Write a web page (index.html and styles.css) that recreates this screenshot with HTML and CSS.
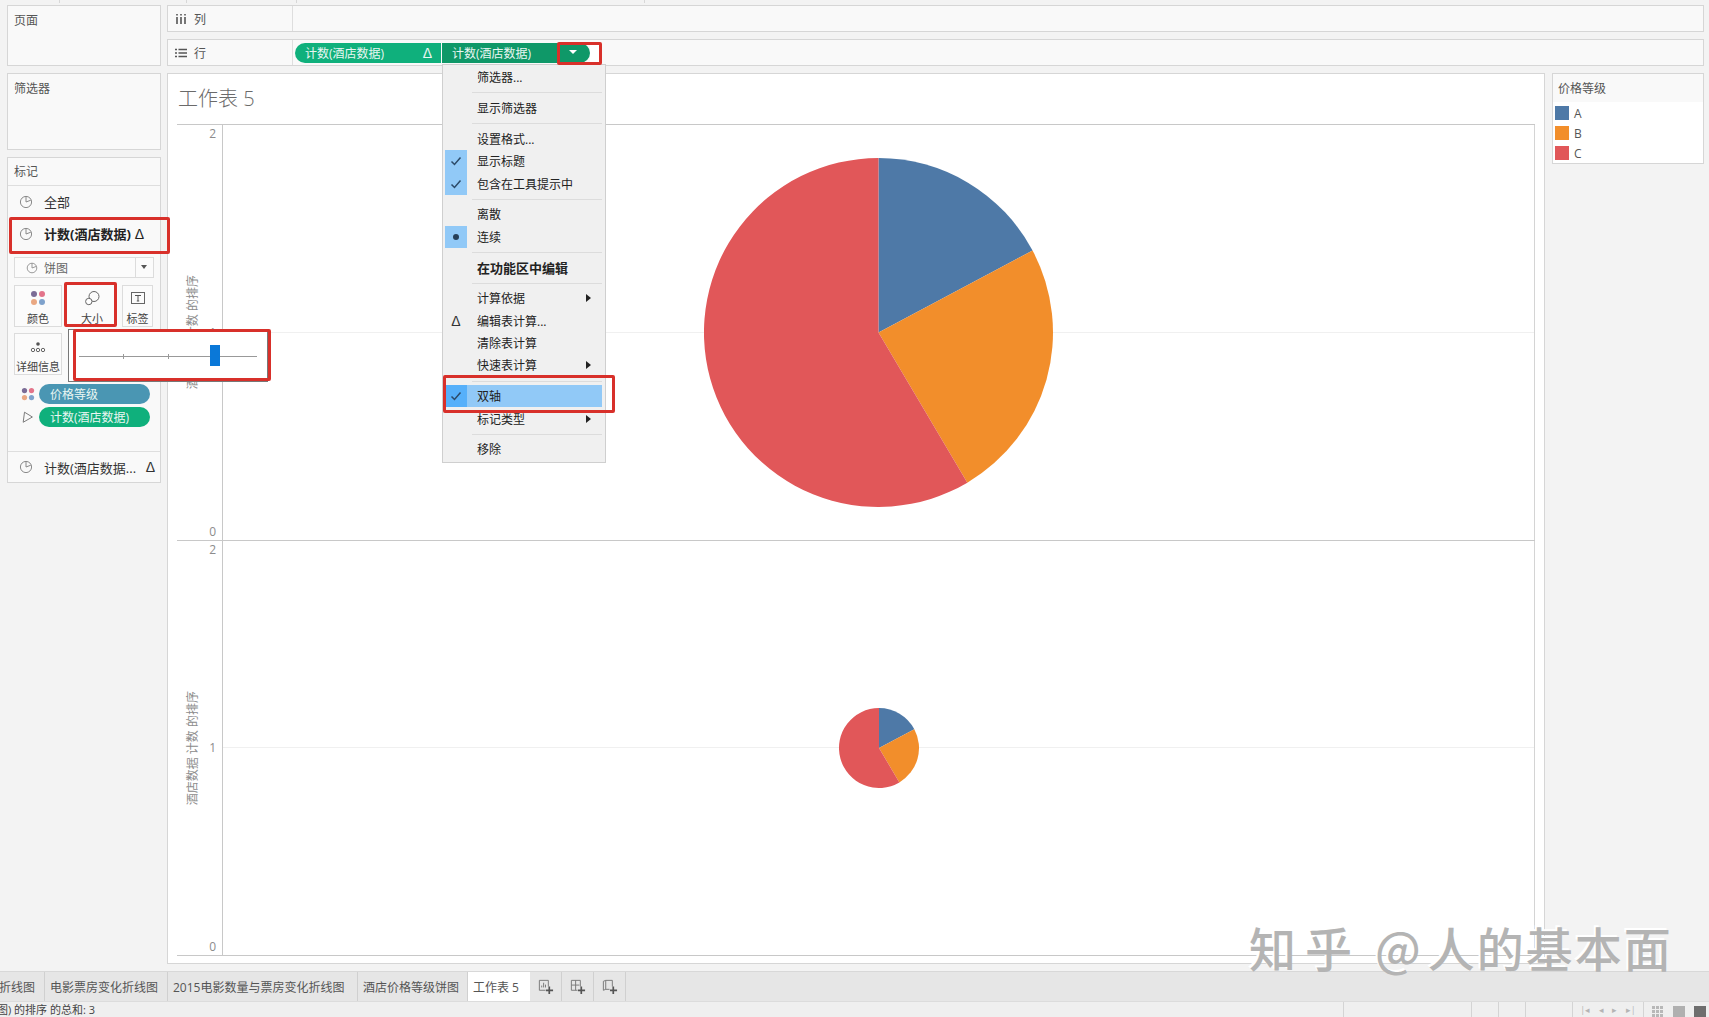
FILE: index.html
```html
<!DOCTYPE html>
<html lang="zh-CN">
<head>
    <meta charset="UTF-8">
    <title>工作表 5</title>
    <link rel="stylesheet" href="styles.css">
</head>
<body>
    <svg class="icon-defs" width="0" height="0">
        <symbol id="pie-icon" viewBox="0 0 14 14">
            <circle cx="7" cy="7" r="5.6" fill="none" stroke="#8a8a8a" stroke-width="1"/>
            <path d="M7 1.4V7L11.8 5.2" fill="none" stroke="#8a8a8a" stroke-width="1"/>
        </symbol>
        <symbol id="dots-icon" viewBox="0 0 16 16">
            <circle cx="4" cy="4" r="3" fill="#7b6c96"/>
            <circle cx="12" cy="4" r="3" fill="#e3748a"/>
            <circle cx="4" cy="12" r="3" fill="#e9a883"/>
            <circle cx="12" cy="12" r="3" fill="#7fa2cc"/>
        </symbol>
    </svg>

    <div class="top-ticks"><span></span><span></span><span></span><span></span></div>

    <div class="workspace">
        <aside class="sidebar">
            <section class="panel pages-panel"><div class="panel-title">页面</div></section>
            <section class="panel filters-panel"><div class="panel-title">筛选器</div></section>
            <section class="panel marks-panel">
                <div class="panel-title marks-title">标记</div>
                <div class="marks-row"><svg class="row-icon"><use href="#pie-icon"/></svg>全部</div>
                <div class="marks-row marks-row-active"><svg class="row-icon"><use href="#pie-icon"/></svg>计数(酒店数据) <span class="delta">Δ</span></div>
                <div class="mark-type">
                    <svg class="type-icon"><use href="#pie-icon"/></svg>
                    <span class="type-name">饼图</span>
                    <span class="type-arrow"></span>
                </div>
                <div class="mark-cards">
                    <div class="mark-card"><svg class="card-icon" viewBox="0 0 16 16"><use href="#dots-icon"/></svg>颜色</div>
                    <div class="mark-card mark-card-plain">
                        <svg class="card-icon" viewBox="0 0 16 16"><circle cx="10" cy="6.5" r="5" fill="none" stroke="#666"/><circle cx="4.8" cy="11.5" r="3.2" fill="#fff" stroke="#666"/></svg>大小
                    </div>
                    <div class="mark-card">
                        <svg class="card-icon" viewBox="0 0 16 16"><rect x="1.5" y="2.5" width="13" height="11" fill="none" stroke="#666"/><path d="M5 5.5H11M8 5.5V11M6.8 11H9.2" fill="none" stroke="#555"/></svg>标签
                    </div>
                    <div class="mark-card">
                        <svg class="card-icon" viewBox="0 0 16 16"><circle cx="8" cy="6" r="1.8" fill="#555"/><circle cx="3" cy="12" r="1.7" fill="none" stroke="#666"/><circle cx="8" cy="12" r="1.7" fill="none" stroke="#666"/><circle cx="13" cy="12" r="1.7" fill="none" stroke="#666"/></svg>详细信息
                    </div>
                </div>
                <div class="mark-field">
                    <svg class="field-icon" viewBox="0 0 16 16"><use href="#dots-icon"/></svg>
                    <span class="field-pill field-pill-blue">价格等级</span>
                </div>
                <div class="mark-field">
                    <svg class="field-icon" viewBox="0 0 16 16"><path d="M4 2.5L13 8L2.5 14Z" fill="none" stroke="#777" stroke-width="1.1"/></svg>
                    <span class="field-pill field-pill-green">计数(酒店数据)</span>
                </div>
                <div class="marks-row marks-row-last"><svg class="row-icon"><use href="#pie-icon"/></svg>计数(酒店数据... <span class="delta delta-end">Δ</span></div>
            </section>
        </aside>

        <main class="content">
            <div class="shelf">
                <div class="shelf-label">
                    <svg class="shelf-icon" viewBox="0 0 10 12"><path d="M1 1V2.5M5 1V2.5M9 1V2.5M1 4V11M5 4V11M9 4V11" stroke="#555" stroke-width="1.6" fill="none"/></svg>列
                </div>
                <div class="shelf-fields"></div>
            </div>
            <div class="shelf">
                <div class="shelf-label">
                    <svg class="shelf-icon" viewBox="0 0 12 10"><path d="M0 1.5H2M3.5 1.5H12M0 5H2M3.5 5H12M0 8.5H2M3.5 8.5H12" stroke="#555" stroke-width="1.6" fill="none"/></svg>行
                </div>
                <div class="shelf-fields">
                    <div class="shelf-pill shelf-pill-first">计数(酒店数据)<span class="delta pill-delta">Δ</span></div>
                    <div class="shelf-pill shelf-pill-second">计数(酒店数据)<span class="pill-arrow"></span></div>
                    <div class="shelf-slot"></div>
                </div>
            </div>

            <div class="view-row">
                <section class="view">
                    <h1 class="view-title">工作表 5</h1>
                    <div class="chart">
                        <div class="pane">
                            <div class="axis">
                                <div class="axis-title"><span>酒店数据 计数 的排序</span></div>
                                <div class="axis-ticks"><span>2</span><span>1</span><span>0</span></div>
                            </div>
                            <div class="plot">
                                <svg class="pie pie-large" viewBox="-175 -175 350 350">
                                    <path d="M0 0L0 -175A175 175 0 0 1 154.5 -82.2Z" fill="#4e79a7"/>
                                    <path d="M0 0L154.5 -82.2A175 175 0 0 1 89.1 150.6Z" fill="#f28e2b"/>
                                    <path d="M0 0L89.1 150.6A175 175 0 1 1 0 -175Z" fill="#e15759"/>
                                </svg>
                            </div>
                        </div>
                        <div class="pane">
                            <div class="axis">
                                <div class="axis-title"><span>酒店数据 计数 的排序</span></div>
                                <div class="axis-ticks"><span>2</span><span>1</span><span>0</span></div>
                            </div>
                            <div class="plot">
                                <svg class="pie pie-small" viewBox="-175 -175 350 350">
                                    <path d="M0 0L0 -175A175 175 0 0 1 154.5 -82.2Z" fill="#4e79a7"/>
                                    <path d="M0 0L154.5 -82.2A175 175 0 0 1 89.1 150.6Z" fill="#f28e2b"/>
                                    <path d="M0 0L89.1 150.6A175 175 0 1 1 0 -175Z" fill="#e15759"/>
                                </svg>
                            </div>
                        </div>
                    </div>
                </section>

                <aside class="legend">
                    <div class="legend-title">价格等级</div>
                    <div class="legend-item"><span class="swatch swatch-a"></span>A</div>
                    <div class="legend-item"><span class="swatch swatch-b"></span>B</div>
                    <div class="legend-item"><span class="swatch swatch-c"></span>C</div>
                </aside>
            </div>
        </main>
    </div>

    <nav class="tabs">
        <div class="tab tab-cut">折线图</div>
        <div class="tab tab-movies">电影票房变化折线图</div>
        <div class="tab tab-2015">2015电影数量与票房变化折线图</div>
        <div class="tab tab-hotel">酒店价格等级饼图</div>
        <div class="tab tab-active">工作表 5</div>
        <div class="tab tab-add">
            <svg class="add-icon" viewBox="0 0 18 18"><path d="M2.5 2.5H12V9M9 13H2.5V2.5M5 10V8M7 10V5M9 10V7" fill="none" stroke="#777"/><path d="M13 9V17M9.5 13H17" stroke="#555" stroke-width="1.8"/></svg>
        </div>
        <div class="tab tab-add">
            <svg class="add-icon" viewBox="0 0 18 18"><path d="M2.5 2.5H12V9M9 13H2.5V2.5M2.5 7.5H11M7 2.5V13" fill="none" stroke="#777"/><path d="M13 9V17M9.5 13H17" stroke="#555" stroke-width="1.8"/></svg>
        </div>
        <div class="tab tab-add">
            <svg class="add-icon" viewBox="0 0 18 18"><path d="M2.5 3.5L5 2.5V12L2.5 13ZM5 2.5H12V9M9 12H5" fill="none" stroke="#777"/><path d="M13 9V17M9.5 13H17" stroke="#555" stroke-width="1.8"/></svg>
        </div>
    </nav>

    <footer class="statusbar">
        <div class="status-cell status-text">图) 的排序 的总和: 3</div>
        <div class="status-cell status-wide"></div>
        <div class="status-cell status-small"></div>
        <div class="status-cell status-small"></div>
        <div class="status-cell status-mid"></div>
        <div class="status-cell status-nav">
            <span class="nav-mark">|◂</span><span class="nav-mark">◂</span><span class="nav-mark">▸</span><span class="nav-mark">▸|</span>
        </div>
        <div class="status-cell status-views">
            <span class="view-btn view-btn-grid"></span><span class="view-btn view-btn-fill"></span><span class="view-btn view-btn-dark"></span>
        </div>
    </footer>

    <!-- context menu on the second pill -->
    <div class="menu">
        <div class="menu-item"><span class="gutter"></span>筛选器...</div>
        <div class="menu-sep"></div>
        <div class="menu-item"><span class="gutter"></span>显示筛选器</div>
        <div class="menu-sep"></div>
        <div class="menu-item"><span class="gutter"></span>设置格式...</div>
        <div class="menu-item"><span class="gutter gutter-on"><svg class="check" viewBox="0 0 12 12"><path d="M1.5 6.5L4.5 9.5L10.5 2.5" fill="none" stroke="#2c4a68" stroke-width="1.5"/></svg></span>显示标题</div>
        <div class="menu-item"><span class="gutter gutter-on"><svg class="check" viewBox="0 0 12 12"><path d="M1.5 6.5L4.5 9.5L10.5 2.5" fill="none" stroke="#2c4a68" stroke-width="1.5"/></svg></span>包含在工具提示中</div>
        <div class="menu-sep"></div>
        <div class="menu-item"><span class="gutter"></span>离散</div>
        <div class="menu-item"><span class="gutter gutter-on"><span class="bullet"></span></span>连续</div>
        <div class="menu-sep"></div>
        <div class="menu-item menu-item-bold"><span class="gutter"></span>在功能区中编辑</div>
        <div class="menu-sep"></div>
        <div class="menu-item"><span class="gutter"></span>计算依据<span class="sub-arrow"></span></div>
        <div class="menu-item"><span class="gutter gutter-delta">Δ</span>编辑表计算...</div>
        <div class="menu-item"><span class="gutter"></span>清除表计算</div>
        <div class="menu-item"><span class="gutter"></span>快速表计算<span class="sub-arrow"></span></div>
        <div class="menu-sep"></div>
        <div class="menu-item menu-item-hover"><span class="gutter gutter-hover"><svg class="check" viewBox="0 0 12 12"><path d="M1.5 6.5L4.5 9.5L10.5 2.5" fill="none" stroke="#2c4a68" stroke-width="1.5"/></svg></span>双轴</div>
        <div class="menu-item"><span class="gutter"></span>标记类型<span class="sub-arrow"></span></div>
        <div class="menu-sep"></div>
        <div class="menu-item"><span class="gutter"></span>移除</div>
    </div>

    <!-- size slider popup -->
    <div class="size-popup">
        <div class="size-track">
            <span class="size-tick size-tick-1"></span>
            <span class="size-tick size-tick-2"></span>
            <span class="size-thumb"></span>
        </div>
    </div>

    <!-- red annotation boxes -->
    <div class="callout callout-arrow"></div>
    <div class="callout callout-row"></div>
    <div class="callout callout-size"></div>
    <div class="callout callout-slider"></div>
    <div class="callout callout-dual"></div>

    <div class="watermark"><span class="wm-brand">知乎</span><span class="wm-at">@</span><span class="wm-name">人的基本面</span></div>
</body>
</html>
```

FILE: styles.css
```css
* {
    margin: 0;
    padding: 0;
    box-sizing: border-box;
}

body {
    position: relative;
    display: flex;
    flex-direction: column;
    height: 100vh;
    overflow: hidden;
    background-color: #f3f3f3;
    color: #555;
    font-family: "Open Sans", "Noto Sans CJK SC", sans-serif;
    font-size: 12px;
}

.icon-defs {
    position: absolute;
}

.top-ticks {
    display: flex;
    height: 5px;
    flex-shrink: 0;
}

.top-ticks span {
    height: 3px;
    border-right: 1px solid #d8d8d8;
}

.top-ticks span:nth-child(1) { width: 60px; }
.top-ticks span:nth-child(2) { width: 127px; }
.top-ticks span:nth-child(3) { width: 110px; }
.top-ticks span:nth-child(4) { width: 348px; }

.workspace {
    display: flex;
    flex: 1;
    min-height: 0;
    gap: 6px;
    padding: 0 5px 7px 7px;
}

/* left column */
.sidebar {
    display: flex;
    flex-direction: column;
    gap: 7px;
    width: 154px;
    flex-shrink: 0;
}

.panel {
    background: #f9f9f9;
    border: 1px solid #d6d6d6;
}

.pages-panel {
    height: 61px;
}

.filters-panel {
    height: 77px;
}

.marks-panel {
    height: 326px;
}

.panel-title {
    padding: 7px 0 0 6px;
    line-height: 16px;
}

.marks-title {
    height: 28px;
    padding-top: 6px;
    border-bottom: 1px solid #dedede;
}

.marks-row {
    display: flex;
    align-items: center;
    height: 32px;
    padding: 0 0 1px 11px;
    font-size: 13px;
    color: #333;
}

.marks-row-active {
    font-weight: 700;
    color: #222;
}

.marks-row-last {
    margin-top: 24px;
    border-top: 1px solid #dedede;
}

.row-icon {
    width: 14px;
    height: 14px;
    margin-right: 11px;
    flex-shrink: 0;
}

.delta {
    margin-left: 4px;
    font-family: "Liberation Sans", sans-serif;
    font-size: 14px;
    font-weight: 400;
}

.delta-end {
    margin-left: auto;
    margin-right: 5px;
}

.mark-type {
    display: flex;
    align-items: center;
    height: 21px;
    margin: 7px 6px 0 6px;
    background: #fbfbfb;
    border: 1px solid #dcdcdc;
    color: #666;
}

.type-icon {
    width: 12px;
    height: 12px;
    margin-left: 11px;
}

.type-name {
    flex: 1;
    margin-left: 6px;
}

.type-arrow {
    position: relative;
    width: 18px;
    height: 100%;
    border-left: 1px solid #dcdcdc;
}

.type-arrow::after {
    content: "";
    position: absolute;
    top: 7px;
    left: 5px;
    border: 3.5px solid transparent;
    border-top: 4px solid #555;
}

.mark-cards {
    display: grid;
    grid-template-columns: 48px 52px 31px;
    grid-auto-rows: 42px;
    gap: 6px 4px;
    margin: 7px 0 0 6px;
}

.mark-card {
    display: flex;
    flex-direction: column;
    align-items: center;
    padding-top: 4px;
    background: #fbfbfb;
    border: 1px solid #dcdcdc;
    font-size: 11px;
    line-height: 18px;
    color: #444;
    white-space: nowrap;
}

.mark-card-plain {
    border-color: transparent;
}

.card-icon {
    width: 16px;
    height: 16px;
    margin-bottom: 4px;
    flex-shrink: 0;
}

.mark-field {
    display: flex;
    align-items: center;
    height: 20px;
    margin: 3px 0 0 13px;
}

.mark-cards + .mark-field {
    margin-top: 9px;
}

.field-icon {
    width: 14px;
    height: 14px;
    margin-right: 4px;
}

.field-pill {
    display: flex;
    align-items: center;
    width: 111px;
    height: 20px;
    padding-left: 11px;
    border-radius: 10px;
    color: #e9f6f2;
}

.field-pill-blue {
    background: #4a96b3;
}

.field-pill-green {
    background: #0fb07c;
}

/* shelves */
.content {
    display: flex;
    flex-direction: column;
    flex: 1;
    min-width: 0;
    gap: 7px;
}

.shelf {
    display: flex;
    height: 27px;
    flex-shrink: 0;
    background: #f9f9f9;
    border: 1px solid #d6d6d6;
}

.shelf-label {
    display: flex;
    align-items: center;
    width: 125px;
    padding-left: 7px;
    border-right: 1px solid #dedede;
}

.shelf-icon {
    width: 12px;
    height: 12px;
    margin-right: 7px;
}

.shelf-fields {
    display: flex;
    align-items: center;
    flex: 1;
    padding-left: 2px;
}

.shelf-pill {
    display: flex;
    align-items: center;
    height: 20px;
    padding-left: 10px;
    color: #e9f6f2;
}

.shelf-pill-first {
    width: 146px;
    margin-right: 1px;
    background: #0fb07c;
    border-radius: 10px 0 0 10px;
}

.shelf-pill-second {
    width: 148px;
    background: #0f9868;
    border-radius: 0 10px 10px 0;
}

.shelf-slot {
    width: 10px;
    height: 20px;
    background: #fff;
}

.pill-delta {
    margin-left: auto;
    margin-right: 9px;
}

.pill-arrow {
    margin: 3px 0 0 38px;
    border: 4px solid transparent;
    border-top: 4px solid #fff;
}

/* worksheet */
.view-row {
    display: flex;
    flex: 1;
    min-height: 0;
    gap: 7px;
}

.view {
    display: flex;
    flex-direction: column;
    flex: 1;
    min-width: 0;
    padding: 0 9px 7px;
    background: #fff;
    border: 1px solid #d6d6d6;
}

.view-title {
    height: 50px;
    padding: 12px 0 0 1px;
    font-size: 20px;
    font-weight: 300;
    line-height: 26px;
    color: #6a6a6a;
}

.chart {
    display: flex;
    flex-direction: column;
    flex: 1;
    border-bottom: 1px solid #c8c8c8;
}

.pane {
    display: flex;
    flex: 1;
    border-top: 1px solid #c8c8c8;
}

.axis {
    display: flex;
    width: 46px;
    flex-shrink: 0;
    border-right: 1px solid #c8c8c8;
}

.axis-title {
    display: flex;
    flex: 1;
    align-items: center;
    justify-content: center;
    padding-right: 2px;
}

.axis-title span {
    writing-mode: vertical-rl;
    text-orientation: sideways;
    transform: rotate(180deg);
    color: #8c8c8c;
    white-space: nowrap;
}

.axis-ticks {
    display: flex;
    flex-direction: column;
    justify-content: space-between;
    padding: 1px 6px 0 0;
    line-height: 16px;
    color: #8c8c8c;
}

.plot {
    display: flex;
    flex: 1;
    align-items: center;
    justify-content: center;
    background: linear-gradient(#f0f0f0, #f0f0f0) center / 100% 1px no-repeat;
    border-right: 1px solid #d4d4d4;
}

.pie-large {
    width: 349px;
    height: 349px;
}

.pie-small {
    width: 80px;
    height: 80px;
}

/* legend */
.legend {
    width: 152px;
    height: 91px;
    flex-shrink: 0;
    background: #fff;
    border: 1px solid #d6d6d6;
    color: #555;
}

.legend-title {
    height: 28px;
    padding: 7px 0 0 5px;
    margin-bottom: 1px;
    background: #f9f9f9;
    line-height: 16px;
}

.legend-item {
    display: flex;
    align-items: center;
    height: 20px;
    padding-left: 2px;
}

.swatch {
    width: 14px;
    height: 14px;
    margin-right: 5px;
}

.swatch-a { background: #4e79a7; }
.swatch-b { background: #f28e2b; }
.swatch-c { background: #e15759; }

/* bottom tabs */
.tabs {
    display: flex;
    height: 31px;
    flex-shrink: 0;
    background: #e6e6e6;
    border-top: 1px solid #d8d8d8;
    border-bottom: 1px solid #dcdcdc;
}

.tab {
    display: flex;
    align-items: center;
    flex-shrink: 0;
    padding-left: 5px;
    border-right: 1px solid #d0d0d0;
    color: #555;
    white-space: nowrap;
}

.tab-cut {
    width: 45px;
    padding-left: 0;
    text-indent: -1px;
}

.tab-movies { width: 123px; }
.tab-2015 { width: 190px; }
.tab-hotel { width: 110px; }

.tab-active {
    width: 62px;
    background: #fff;
    border-right: 0;
}

.tab-add {
    justify-content: center;
    width: 32px;
    padding-left: 0;
}

.add-icon {
    width: 17px;
    height: 17px;
}

/* status bar */
.statusbar {
    display: flex;
    height: 15px;
    flex-shrink: 0;
    background: #efefef;
    font-size: 11px;
    line-height: 15px;
    color: #444;
}

.status-cell {
    height: 100%;
    flex-shrink: 0;
    border-right: 1px solid #d4d4d4;
}

.status-text {
    width: 1344px;
    white-space: nowrap;
    text-indent: -3px;
}

.status-wide { width: 128px; }
.status-small { width: 27px; }
.status-mid { width: 47px; }

.status-nav {
    display: flex;
    justify-content: space-around;
    width: 71px;
    padding: 0 3px;
    font-size: 9px;
    color: #b4b4b4;
}

.status-views {
    display: flex;
    gap: 9px;
    padding: 4px 0 0 8px;
    border-right: 0;
}

.view-btn {
    width: 12px;
    height: 11px;
}

.view-btn-grid {
    background:
        repeating-linear-gradient(90deg, transparent 0 3px, #efefef 3px 4px),
        repeating-linear-gradient(0deg, #b8b8b8 0 3px, #efefef 3px 4px);
}

.view-btn-fill {
    background: #b0b0b0;
}

.view-btn-dark {
    background: #6e6e6e;
}

/* context menu */
.menu {
    position: absolute;
    left: 442px;
    top: 64px;
    width: 164px;
    height: 399px;
    padding: 1px 3px 0 2px;
    background: #f0f0f0;
    border: 1px solid #cfcfcf;
    color: #222;
}

.menu-item {
    display: flex;
    align-items: center;
    height: 22.4px;
}

.menu-item-bold {
    font-size: 13px;
    font-weight: 700;
}

.menu-item-hover {
    background: #91c9f7;
}

.gutter {
    display: flex;
    align-items: center;
    justify-content: center;
    width: 22px;
    height: 100%;
    margin-right: 10px;
    flex-shrink: 0;
}

.gutter-on {
    background: #91c9f7;
}

.gutter-hover {
    background: #56b0fa;
}

.gutter-delta {
    font-family: "Liberation Sans", sans-serif;
    font-size: 14px;
    color: #333;
}

.check {
    width: 12px;
    height: 12px;
}

.bullet {
    width: 6px;
    height: 6px;
    background: #263f58;
    border-radius: 50%;
}

.sub-arrow {
    margin-left: auto;
    margin-right: 11px;
    border: 4px solid transparent;
    border-left: 5px solid #222;
    border-right: 0;
}

.menu-sep {
    height: 1px;
    margin: 4px 0 3.4px 27px;
    background: #dcdcdc;
}

/* size popup */
.size-popup {
    position: absolute;
    left: 68px;
    top: 329px;
    width: 200px;
    height: 53px;
    padding: 26px 10px 0;
    background: #fff;
    border: 1px solid #777;
}

.size-track {
    position: relative;
    height: 1px;
    background: #999;
}

.size-tick {
    position: absolute;
    top: -2px;
    width: 1px;
    height: 5px;
    background: #999;
}

.size-tick-1 { left: 44px; }
.size-tick-2 { left: 89px; }

.size-thumb {
    position: absolute;
    top: -11px;
    left: 131px;
    width: 10px;
    height: 21px;
    background: #0a78d8;
}

/* annotation boxes */
.callout {
    position: absolute;
    border: 3px solid #d8302a;
    border-radius: 2px;
}

.callout-arrow { left: 557px; top: 42px; width: 45px; height: 23px; }
.callout-row { left: 9px; top: 217px; width: 161px; height: 37px; }
.callout-size { left: 64px; top: 282px; width: 53px; height: 45px; }
.callout-slider { left: 73px; top: 329px; width: 198px; height: 52px; }
.callout-dual { left: 443px; top: 375px; width: 172px; height: 38px; }

.watermark {
    position: absolute;
    left: 1249px;
    top: 913px;
    font-family: "Noto Sans CJK SC", sans-serif;
    font-size: 47px;
    font-weight: 500;
    line-height: 68px;
    color: #b4b4b4;
    text-shadow: -2px -2px 0 #fff;
    white-space: nowrap;
}

.wm-brand {
    letter-spacing: 9px;
}

.wm-at {
    margin: 0 7px 0 14px;
}

.wm-name {
    letter-spacing: 2px;
}
```
